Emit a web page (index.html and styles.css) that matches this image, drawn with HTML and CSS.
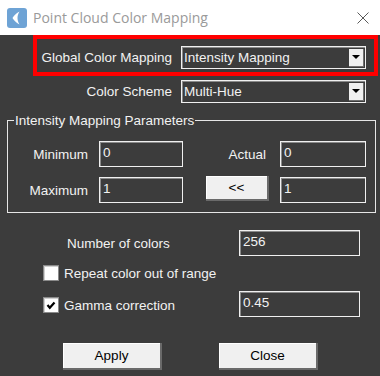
FILE: index.html
```html
<!DOCTYPE html>
<html>
<head>
    <title>Point Cloud Color Mapping</title>
    <link rel="stylesheet" href="styles.css">
</head>
<body>
    <div class="window">
        <div class="titlebar">
            <svg class="app-icon" width="20" height="20" viewBox="0 0 20 20">
                <rect x="0" y="0" width="20" height="20" rx="3" fill="#6ea3d5"/>
                <path d="M12.5 3.5 C9 5.5 6.5 8 5.5 10 C6.5 12 9 14.5 12.5 16.5 C11 14 10.5 12 10.5 10 C10.5 8 11 6 12.5 3.5 Z" fill="#ffffff"/>
            </svg>
            <span class="title">Point Cloud Color Mapping</span>
            <svg class="close-icon" width="12" height="12" viewBox="0 0 12 12">
                <path d="M0.5 0.5 L11.5 11.5 M11.5 0.5 L0.5 11.5" stroke="#5a5a5a" stroke-width="1"/>
            </svg>
        </div>

        <div class="content">
            <div class="highlight">
                <div class="field-row">
                    <label class="field-label">Global Color Mapping</label>
                    <div class="select">
                        <span>Intensity Mapping</span>
                        <span class="select-btn"><i class="arrow"></i></span>
                    </div>
                </div>
            </div>

            <div class="field-row scheme-row">
                <label class="field-label">Color Scheme</label>
                <div class="select">
                    <span>Multi-Hue</span>
                    <span class="select-btn"><i class="arrow"></i></span>
                </div>
            </div>

            <fieldset class="group">
                <legend>Intensity Mapping Parameters</legend>
                <div class="param-grid">
                    <label class="param-label">Minimum</label>
                    <div class="text-box">0</div>
                    <label class="param-label actual-label">Actual</label>
                    <div class="text-box">0</div>

                    <label class="param-label">Maximum</label>
                    <div class="text-box">1</div>
                    <div class="btn-cell"><button class="btn small-btn">&lt;&lt;</button></div>
                    <div class="text-box">1</div>
                </div>
            </fieldset>

            <div class="colors-row">
                <span class="colors-label">Number of colors</span>
                <div class="text-box wide-box">256</div>
            </div>

            <div class="check-row repeat-row">
                <span class="checkbox"></span>
                <span class="check-label">Repeat color out of range</span>
            </div>

            <div class="check-row gamma-row">
                <span class="checkbox checked">
                    <svg width="10" height="9" viewBox="0 0 10 9">
                        <path d="M1.5 4 L3.8 6.8 L8.5 1.5" stroke="#000" stroke-width="2.2" fill="none"/>
                    </svg>
                </span>
                <span class="check-label">Gamma correction</span>
                <div class="text-box wide-box gamma-box">0.45</div>
            </div>

            <div class="actions">
                <button class="btn action-btn">Apply</button>
                <button class="btn action-btn">Close</button>
            </div>
        </div>
    </div>
</body>
</html>
```

FILE: styles.css
```css
:root {
    --panel-bg: #3c3c3c;
    --text-color: #f2f2f2;
    --box-border: #f0f0f0;
    --btn-bg: #f0f0f0;
    --red: #ff0000;
}

body {
    margin: 0;
    padding: 0;
    background: var(--panel-bg);
    font-family: "Liberation Sans", Arial, sans-serif;
    font-size: 13.5px;
    color: var(--text-color);
}

.window {
    width: 380px;
    height: 376px;
    background: var(--panel-bg);
    overflow: hidden;
}

.titlebar {
    height: 35px;
    background: #ffffff;
    display: flex;
    align-items: center;
    box-sizing: border-box;
    padding-left: 7px;
}

.app-icon {
    flex: none;
}

.title {
    margin-left: 6px;
    font-family: "Open Sans", "Noto Sans", sans-serif;
    font-size: 14px;
    color: #9a9a9a;
    flex: 1;
}

.close-icon {
    margin-right: 11px;
}

.content {
    display: flex;
    flex-direction: column;
}

.highlight {
    margin-left: 33px;
    width: 345px;
    height: 41px;
    box-sizing: border-box;
    border: 4px solid var(--red);
    padding: 7px 0 0 0;
}

.field-row {
    display: flex;
    align-items: center;
    gap: 9px;
}

.field-label {
    width: 135px;
    text-align: right;
}

.scheme-row {
    margin-left: 37px;
    margin-top: 4px;
}

.select {
    width: 185px;
    height: 23px;
    box-sizing: border-box;
    border: 1px solid var(--box-border);
    box-shadow: inset 1px 1px 0 #8a8a8a;
    display: flex;
    align-items: center;
    justify-content: space-between;
    padding-left: 2px;
}

.select-btn {
    width: 14px;
    height: 17px;
    margin-right: 1px;
    background: var(--btn-bg);
    border-right: 1px solid #707070;
    border-bottom: 1px solid #707070;
    display: flex;
    align-items: center;
    justify-content: center;
}

.arrow {
    width: 0;
    height: 0;
    border-left: 4px solid transparent;
    border-right: 4px solid transparent;
    border-top: 4px solid #000;
}

.group {
    margin: 10px 0 0 7px;
    width: 369px;
    box-sizing: border-box;
    border: 1px solid #e6e6e6;
    padding: 13px 0 9px 0;
}

.group legend {
    margin-left: 6px;
    padding: 0 1px;
    line-height: 15px;
}

.param-grid {
    display: grid;
    grid-template-columns: 80px 84px 75px 86px;
    grid-template-rows: 26px 26px;
    column-gap: 11px;
    row-gap: 10px;
    align-items: center;
}

.param-label {
    text-align: right;
}

.actual-label {
    padding-right: 3px;
}

.text-box {
    height: 26px;
    box-sizing: border-box;
    border: 1px solid var(--box-border);
    box-shadow: inset 1px 1px 0 #8a8a8a;
    padding: 3px 0 0 3px;
    line-height: 15px;
}

.btn-cell {
    display: flex;
    justify-content: flex-end;
    align-self: start;
    margin-top: -1px;
}

.btn {
    font-family: "Liberation Sans", Arial, sans-serif;
    font-size: 13.5px;
    color: #000;
    background: var(--btn-bg);
    border: none;
    border-right: 2px solid #6a6a6a;
    border-bottom: 2px solid #6a6a6a;
    box-shadow: inset 1px 1px 0 #ffffff;
    padding: 0;
    cursor: pointer;
}

.small-btn {
    width: 63px;
    height: 25px;
}

.colors-row {
    display: flex;
    align-items: center;
    margin-top: 17px;
    margin-left: 67px;
}

.colors-label {
    width: 172px;
}

.wide-box {
    width: 121px;
}

.check-row {
    display: flex;
    align-items: center;
    margin-left: 43px;
    height: 26px;
}

.repeat-row {
    margin-top: 4px;
}

.checkbox {
    width: 16px;
    height: 16px;
    box-sizing: border-box;
    background: #ffffff;
    border: 1px solid #8a8a8a;
    box-shadow: inset 1px 1px 0 #d0d0d0;
    display: flex;
    align-items: center;
    justify-content: center;
}

.check-label {
    margin-left: 5px;
}

.gamma-row {
    margin-top: 6px;
}

.gamma-row .check-label {
    width: 175px;
}

.gamma-box {
    margin-top: -2px;
}

.actions {
    display: flex;
    gap: 57px;
    margin-top: 25px;
    margin-left: 63px;
}

.action-btn {
    width: 99px;
    height: 27px;
}
```
